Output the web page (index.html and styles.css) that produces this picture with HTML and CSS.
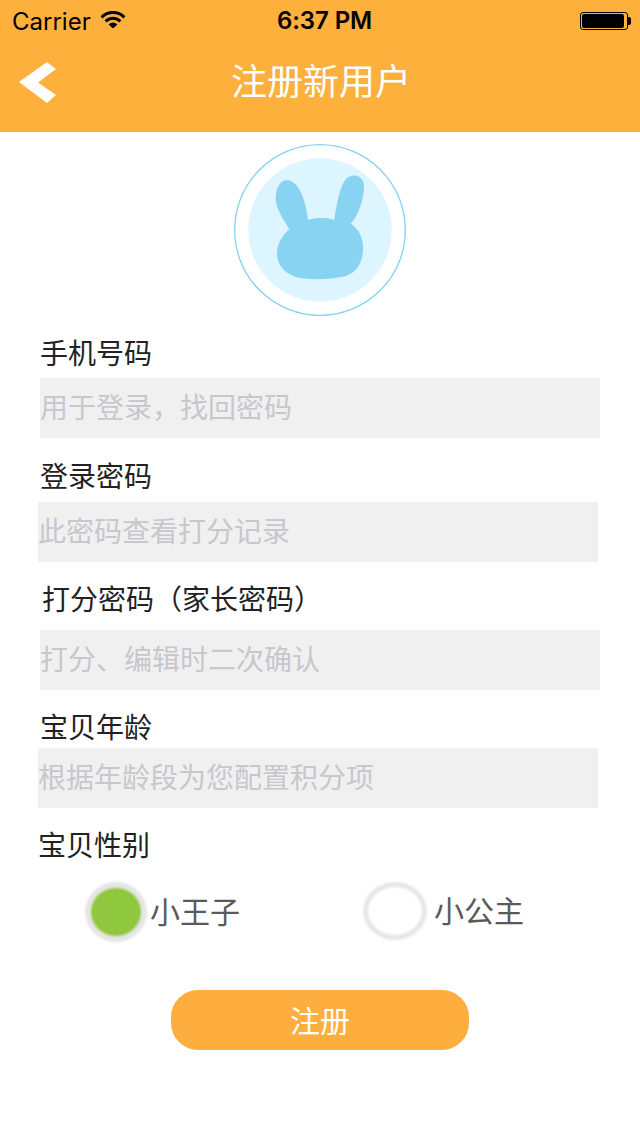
FILE: index.html
```html
<!DOCTYPE html>
<html lang="zh-CN">
<head>
<meta charset="utf-8">
<title>注册新用户</title>
<link rel="stylesheet" href="styles.css">
</head>
<body>
<header class="header">
  <div class="status">
    <div class="status-left">
      <span class="carrier">Carrier</span>
      <svg class="wifi" viewBox="0 0 26 18" aria-hidden="true">
        <path d="M0.5 6.2 A17.5 17.5 0 0 1 25.5 6.2 L23.4 8.4 A14.5 14.5 0 0 0 2.6 8.4 Z"/>
        <path d="M4.6 10.4 A11.7 11.7 0 0 1 21.4 10.4 L19.3 12.5 A8.8 8.8 0 0 0 6.7 12.5 Z"/>
        <path d="M8.6 14.4 A6.2 6.2 0 0 1 17.4 14.4 L13 18.6 Z"/>
      </svg>
    </div>
    <span class="time">6:37 PM</span>
    <div class="battery"><span class="battery-level"></span><span class="battery-cap"></span></div>
  </div>
  <div class="nav">
    <svg class="back" viewBox="0 0 40 42" aria-hidden="true"><path d="M1 21 L29 1 L38 8 L20 21.500 L38 34 L29 42 Z"/></svg>
    <h1 class="title">注册新用户</h1>
  </div>
</header>
<main class="form">
  <div class="avatar">
    <svg class="avatar-art" viewBox="27 27 516 516" aria-hidden="true">
      <circle class="avatar-ring" cx="285" cy="285" r="256"/>
      <circle class="avatar-fill" cx="285" cy="285" r="215"/>
      <path class="rabbit" d="M193 283 C172 248 150 218 152 185 C154 150 172 133 190 136 C217 140 242 185 249 255 C275 248 305 247 328 255 C335 205 345 150 365 130 C380 116 410 118 416 145 C420 180 405 235 377 266 C402 282 416 310 414 345 C412 385 395 412 360 424 C320 433 270 435 230 430 C190 422 160 402 156 360 C155 330 170 303 193 283 Z"/>
    </svg>
  </div>

  <label class="label label-a" for="phone">手机号码</label>
  <input class="field field-a" id="phone" type="text" placeholder="用于登录，找回密码">

  <label class="label label-a label-second" for="pass">登录密码</label>
  <input class="field field-b" id="pass" type="text" placeholder="此密码查看打分记录">

  <label class="label label-c" for="score">打分密码（家长密码）</label>
  <input class="field field-a" id="score" type="text" placeholder="打分、编辑时二次确认">

  <label class="label label-a label-fourth" for="age">宝贝年龄</label>
  <input class="field field-b" id="age" type="text" placeholder="根据年龄段为您配置积分项">

  <div class="label label-d">宝贝性别</div>

  <div class="gender">
    <div class="option option-prince">
      <span class="radio radio-on"></span><span class="option-text">小王子</span>
    </div>
    <div class="option option-princess">
      <span class="radio radio-off"></span><span class="option-text">小公主</span>
    </div>
  </div>

  <button class="submit" type="button">注册</button>
</main>
</body>
</html>
```
FILE: styles.css
```css
* { box-sizing: border-box; }
html, body { margin: 0; padding: 0; }
body {
  width: 640px;
  height: 1136px;
  background: #fff;
  font-family: "Noto Sans CJK SC", "Liberation Sans", sans-serif;
  overflow: hidden;
}
.header { height: 132px; background: #fdb03c; }
.status {
  height: 40px;
  position: relative;
  display: flex;
  align-items: center;
  justify-content: space-between;
  padding: 2px 12px 0 12px;
  font-family: Inter, "Liberation Sans", sans-serif;
  color: #000;
  font-size: 24px;
}
.status-left { display: flex; align-items: center; gap: 9px; }
.wifi { width: 26px; height: 18px; fill: #000; margin-top: -4px; }
.time {
  position: absolute;
  left: 277px;
  top: 6px;
  font-weight: 600;
  font-size: 24px;
  letter-spacing: -0.1px;
}
.battery {
  width: 48px;
  height: 18px;
  position: relative;
  border: 1px solid #000;
  border-radius: 3px;
  padding: 1px;
}
.battery-level { display: block; height: 100%; background: #000; border-radius: 2px; width: 42px; }
.battery-cap {
  position: absolute;
  right: -4px;
  top: 4px;
  width: 3px;
  height: 8px;
  background: #000;
  border-radius: 0 2px 2px 0;
}
.nav {
  height: 92px;
  position: relative;
  display: flex;
  align-items: center;
  justify-content: center;
  padding: 0 0 14px 2px;
}
.back {
  position: absolute;
  left: 18px;
  top: 21px;
  width: 40px;
  height: 42px;
  fill: #fff;
  filter: blur(0.4px);
}
.title {
  margin: 0;
  font-size: 36px;
  font-weight: 400;
  line-height: 50px;
  color: #fff;
}
.form { display: flex; flex-direction: column; align-items: flex-start; }
.avatar { align-self: center; margin-top: 12px; height: 172px; }
.avatar-art { display: block; width: 172px; height: 172px; }
.avatar-ring { fill: #fff; stroke: #84d2f0; stroke-width: 4; }
.avatar-fill { fill: #ddf5fe; }
.rabbit { fill: #87d3f1; }
.label {
  display: block;
  font-size: 28px;
  line-height: 40px;
  font-weight: 400;
  color: #222;
}
.label-a { margin: 16px 0 6px 40px; }
.label-second { margin-top: 17px; margin-bottom: 7px; }
.label-c { margin: 16px 0 12px 42px; }
.label-fourth { margin-top: 16px; margin-bottom: 2px; }
.label-d { margin: 16px 0 1px 38px; }
.field {
  display: block;
  width: 560px;
  height: 60px;
  border: 0;
  border-radius: 0;
  outline: 0;
  padding: 0 0 4px;
  background: #f0f0f0;
  font-family: inherit;
  font-size: 28px;
  font-weight: 400;
}
.field::placeholder { color: #c7c7cd; opacity: 1; }
.field-a { margin-left: 40px; }
.field-b { margin-left: 38px; }
.gender { display: flex; align-items: center; margin: 16px 0 0 85px; height: 62px; }
.option { display: flex; align-items: center; }
.option-prince { width: 278px; gap: 3px; }
.option-princess { gap: 7px; margin-bottom: 2px; }
.option-text { font-size: 30px; line-height: 40px; padding-bottom: 4px; color: #5a5a5a; font-weight: 400; }
.radio { display: block; border-radius: 50%; filter: blur(0.8px); }
.radio-on {
  width: 62px;
  height: 60px;
  background: #8fc73e;
  border: 6px solid #e6e6e6;
}
.radio-off {
  width: 64px;
  height: 58px;
  background: #fff;
  border: 5px solid #e6e6e6;
}
.submit {
  align-self: center;
  width: 298px;
  height: 60px;
  margin-top: 47px;
  border: 0;
  border-radius: 27px;
  background: #fdae3e;
  color: #fff;
  font-family: inherit;
  font-size: 30px;
  font-weight: 400;
  padding: 0 0 2px;
}
```
